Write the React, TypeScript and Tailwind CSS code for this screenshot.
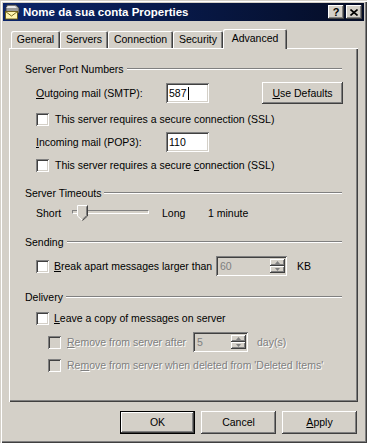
import React from "react";

const raised =
  "shadow-[inset_-1px_-1px_#404040,inset_1px_1px_#ffffff,inset_-2px_-2px_#808080,inset_2px_2px_#d4d0c8]";
const sunken =
  "shadow-[inset_1px_1px_#808080,inset_-1px_-1px_#ffffff,inset_2px_2px_#404040,inset_-2px_-2px_#d4d0c8]";
const dim = "text-[#808080] [text-shadow:1px_1px_0_#ffffff]";

function Group({ label, className = "" }: { label: string; className?: string }) {
  return (
    <div className={`flex h-[14px] items-center pl-[16px] pr-[16px] ${className}`}>
      <span>{label}</span>
      <div className="ml-[3px] h-[2px] flex-1 border-t border-b border-t-[#808080] border-b-white" />
    </div>
  );
}

function Check({ disabled = false }: { disabled?: boolean }) {
  return (
    <div
      className={`h-[13px] w-[13px] shrink-0 ${sunken} ${disabled ? "bg-[#d4d0c8]" : "bg-white"}`}
    />
  );
}

function Arrow({ up }: { up?: boolean }) {
  return (
    <div className={`flex h-[8px] items-center justify-center bg-[#d4d0c8] ${raised}`}>
      <svg width="5" height="3" viewBox="0 0 5 3">
        <polygon points={up ? "0,3 5,3 2.5,0" : "0,0 5,0 2.5,3"} fill="#808080" />
      </svg>
    </div>
  );
}

function Spin({ value, width }: { value: string; width: string }) {
  return (
    <div className={`flex h-[20px] shrink-0 ${width} bg-[#d4d0c8] p-[2px] ${sunken}`}>
      <div className="flex-1 pl-[2px] leading-[16px] text-[#808080]">{value}</div>
      <div className="flex w-[15px] flex-col justify-between py-px">
        <Arrow up />
        <Arrow />
      </div>
    </div>
  );
}

function Button({ children, isDefault = false, className = "" }: { children: React.ReactNode; isDefault?: boolean; className?: string }) {
  return (
    <div
      className={`flex h-[23px] shrink-0 items-center justify-center bg-[#d4d0c8] ${
        isDefault
          ? "shadow-[inset_0_0_0_1px_#000000,inset_-2px_-2px_#404040,inset_2px_2px_#ffffff,inset_-3px_-3px_#808080]"
          : raised
      } ${className}`}
    >
      {children}
    </div>
  );
}

function Tab({ label, width, active = false }: { label: string; width: string; active?: boolean }) {
  return (
    <div
      className={`flex items-start justify-center ${width} ${
        active
          ? "relative z-10 h-[20px] pt-[3px] shadow-[inset_1px_1px_#ffffff,inset_-1px_0_#404040,inset_-2px_0_#808080]"
          : "mb-px h-[17px] pt-[2px] shadow-[inset_1px_1px_#ffffff,inset_-1px_0_#404040,inset_-2px_0_#808080]"
      } rounded-t-[2px] bg-[#d4d0c8]`}
    >
      {label}
    </div>
  );
}

function AccountIcon() {
  return (
    <svg width="16" height="16" viewBox="0 0 16 16">
      <path d="M3 1 h9 l3 3 v5 h-13 v-5 z" fill="#9a9a9a" stroke="#3a3a3a" strokeWidth="0.8" />
      <path d="M4 2 h7 l2 2 h-11 z" fill="#e8e8e8" />
      <rect x="1.5" y="7.5" width="12" height="7.5" fill="#fff6b0" stroke="#6b5a10" strokeWidth="0.9" />
      <path d="M1.5 7.5 L7.5 12 L13.5 7.5" fill="none" stroke="#6b5a10" strokeWidth="0.9" />
    </svg>
  );
}

export default function App() {
  return (
    <div
      className="flex h-[443px] w-[367px] flex-col whitespace-nowrap bg-[#d4d0c8] p-[3px] text-[10.5px] leading-[13px] text-black shadow-[inset_1px_1px_#d4d0c8,inset_2px_2px_#ffffff,inset_-1px_-1px_#404040,inset_-2px_-2px_#808080]"
      style={{ fontFamily: '"Liberation Sans", Arial, sans-serif' }}
    >
      {/* Title bar */}
      <div className="flex h-[18px] items-center bg-gradient-to-r from-[#0a246a] to-[#050d26] pl-[1px] pr-[2px]">
        <AccountIcon />
        <span className="ml-[3px] text-[11.5px] font-bold text-white">Nome da sua conta Properties</span>
        <div className="ml-auto flex gap-[2px]">
          <Button className="!h-[14px] w-[16px] text-[11px] font-bold">?</Button>
          <Button className="!h-[14px] w-[16px]">
            <svg width="8" height="7" viewBox="0 0 8 7">
              <path d="M0.5 0.5 L7.5 6.5 M7.5 0.5 L0.5 6.5" stroke="#000" strokeWidth="1.6" />
            </svg>
          </Button>
        </div>
      </div>

      <div className="flex flex-1 flex-col px-[6px]">
        {/* Tabs */}
        <div className="-mb-px mt-[8px] flex h-[20px] items-end pl-[2px]">
          <Tab label="General" width="w-[49px]" />
          <Tab label="Servers" width="w-[48px]" />
          <Tab label="Connection" width="w-[65px]" />
          <Tab label="Security" width="w-[50px]" />
          <Tab label="Advanced" width="w-[64px]" active />
        </div>

        {/* Panel */}
        <div className="flex h-[354px] flex-col pt-[14px] shadow-[inset_1px_1px_#ffffff,inset_-1px_-1px_#404040,inset_-2px_-2px_#808080]">
          <Group label="Server Port Numbers" />

          <div className="mt-[6px] flex h-[22px] items-center pl-[27px]">
            <span className="w-[130px]">
              <span className="underline">O</span>utgoing mail (SMTP):
            </span>
            <div className={`flex h-[20px] w-[43px] items-center bg-white pl-[3px] ${sunken}`}>
              587<span className="ml-px h-[13px] w-px bg-black" />
            </div>
            <Button className="ml-[53px] !h-[22px] w-[81px]">
              <span>
                <span className="underline">U</span>se Defaults
              </span>
            </Button>
          </div>

          <div className="mt-[8px] flex h-[14px] items-center gap-[6px] pl-[27px]">
            <Check />
            <span>This server requires a secure connection (SSL)</span>
          </div>

          <div className="mt-[6px] flex h-[20px] items-center pl-[27px]">
            <span className="w-[130px]">
              <span className="underline">I</span>ncoming mail (POP3):
            </span>
            <div className={`flex h-[20px] w-[43px] items-center bg-white pl-[3px] ${sunken}`}>110</div>
          </div>

          <div className="mt-[6px] flex h-[14px] items-center gap-[6px] pl-[27px]">
            <Check />
            <span>
              This server requires a secure <span className="underline">c</span>onnection (SSL)
            </span>
          </div>

          <Group label="Server Timeouts" className="mt-[14px]" />

          <div className="mt-[4px] flex h-[18px] items-center pl-[27px]">
            <span className="w-[36px]">Short</span>
            <div className="relative h-[18px] w-[77px]">
              <div className="absolute left-0 right-0 top-[6px] h-[4px] border-t border-l border-t-[#808080] border-l-[#808080] border-b border-r border-b-white border-r-white bg-[#d4d0c8]" />
              <svg className="absolute left-[5px] top-[1px]" width="11" height="16" viewBox="0 0 11 16">
                <polygon points="0.5,0.5 10.5,0.5 10.5,11 5.5,15.5 0.5,11" fill="#d4d0c8" />
                <polyline points="0.5,11 0.5,0.5 10,0.5" fill="none" stroke="#ffffff" />
                <polyline points="10.5,0.5 10.5,11 5.5,15.5" fill="none" stroke="#404040" />
                <polyline points="9.5,1.5 9.5,10.6 5.5,14.2" fill="none" stroke="#808080" />
                <line x1="0.5" y1="11" x2="5" y2="15" stroke="#ffffff" />
              </svg>
            </div>
            <span className="ml-[13px] w-[46px]">Long</span>
            <span>1 minute</span>
          </div>

          <Group label="Sending" className="mt-[13px]" />

          <div className="mt-[7px] flex h-[20px] items-center pl-[27px]">
            <Check />
            <span className="ml-[5px] w-[162px]">
              <span className="underline">B</span>reak apart messages larger than
            </span>
            <Spin value="60" width="w-[71px]" />
            <span className="ml-[10px]">KB</span>
          </div>

          <Group label="Delivery" className="mt-[14px]" />

          <div className="mt-[7px] flex h-[14px] items-center gap-[5px] pl-[27px]">
            <Check />
            <span>
              <span className="underline">L</span>eave a copy of messages on server
            </span>
          </div>

          <div className="mt-[7px] flex h-[20px] items-center pl-[39px]">
            <Check disabled />
            <span className={`ml-[6px] w-[126px] ${dim}`}>
              <span className="underline">R</span>emove from server after
            </span>
            <Spin value="5" width="w-[55px]" />
            <span className={`ml-[9px] ${dim}`}>day(s)</span>
          </div>

          <div className="mt-[6px] flex h-[14px] items-center pl-[39px]">
            <Check disabled />
            <span className={`ml-[6px] ${dim}`}>
              Re<span className="underline">m</span>ove from server when deleted from 'Deleted Items'
            </span>
          </div>
        </div>

        {/* Buttons */}
        <div className="mt-[9px] flex justify-end gap-[6px] pr-px">
          <Button isDefault className="w-[75px]">OK</Button>
          <Button className="w-[75px]">Cancel</Button>
          <Button className="w-[75px]">
            <span>
              <span className="underline">A</span>pply
            </span>
          </Button>
        </div>
      </div>
    </div>
  );
}
